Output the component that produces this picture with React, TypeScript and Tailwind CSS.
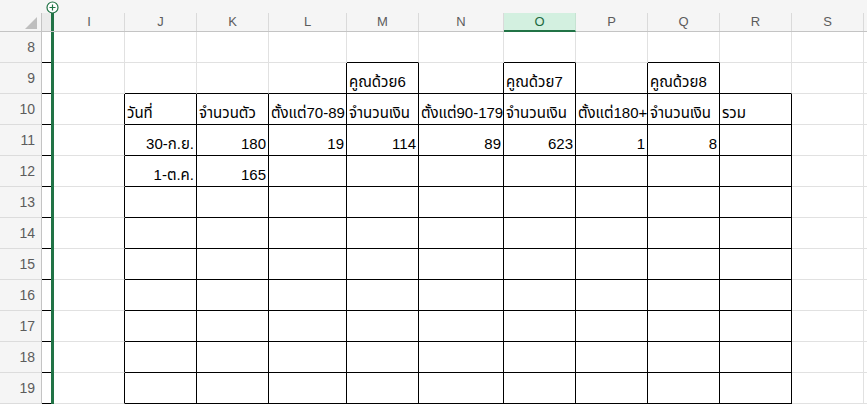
const cols = [
  { k: "I", w: "w-[71px]" },
  { k: "J", w: "w-[72px]" },
  { k: "K", w: "w-[72px]" },
  { k: "L", w: "w-[78px]" },
  { k: "M", w: "w-[72px]" },
  { k: "N", w: "w-[85px]" },
  { k: "O", w: "w-[72px]" },
  { k: "P", w: "w-[72px]" },
  { k: "Q", w: "w-[72px]" },
  { k: "R", w: "w-[72px]" },
  { k: "S", w: "w-[72px]" },
];

const rows = [8, 9, 10, 11, 12, 13, 14, 15, 16, 17, 18, 19];

// cell values: [text, right aligned]
const data: Record<string, [string, boolean]> = {
  "9-M": ["คูณด้วย6", false],
  "9-O": ["คูณด้วย7", false],
  "9-Q": ["คูณด้วย8", false],
  "10-J": ["วันที่", false],
  "10-K": ["จำนวนตัว", false],
  "10-L": ["ตั้งแต่70-89", false],
  "10-M": ["จำนวนเงิน", false],
  "10-N": ["ตั้งแต่90-179", false],
  "10-O": ["จำนวนเงิน", false],
  "10-P": ["ตั้งแต่180+", false],
  "10-Q": ["จำนวนเงิน", false],
  "10-R": ["รวม", false],
  "11-J": ["30-ก.ย.", true],
  "11-K": ["180", true],
  "11-L": ["19", true],
  "11-M": ["114", true],
  "11-N": ["89", true],
  "11-O": ["623", true],
  "11-P": ["1", true],
  "11-Q": ["8", true],
  "12-J": ["1-ต.ค.", true],
  "12-K": ["165", true],
};

function boxed(r: number, c: number) {
  if (c < 0 || c >= cols.length) return false;
  const k = cols[c].k;
  if (r === 9) return k === "M" || k === "O" || k === "Q";
  if (r >= 10 && r <= 19) return c >= 1 && c <= 9;
  return false;
}

const font = "font-['Tahoma','Liberation_Sans','Noto_Sans_Thai','Loma','Garuda',sans-serif]";

export default function App() {
  return (
    <div className={`relative h-[405px] w-[867px] overflow-hidden bg-white ${font}`}>
      {/* top strip */}
      <div className="flex h-[13px] bg-[#f5f5f5]">
        <div className="w-[51px]" />
        <div className="mt-[10px] w-[3px] bg-[#217346]" />
      </div>
      <svg className="absolute left-[46px] top-[1px]" width="13" height="13" viewBox="0 0 13 13">
        <circle cx="6.5" cy="6.5" r="5.5" fill="white" stroke="#217346" strokeWidth="1.2" />
        <path d="M6.5 3.5v6M3.5 6.5h6" stroke="#217346" strokeWidth="1.2" />
      </svg>

      {/* column header */}
      <div className="flex h-[19px] border-b border-[#c4c4c4] bg-[#f5f5f5] text-[13px] text-[#5c5c5c]">
        <div className="relative w-[42px] border-r border-[#c4c4c4]">
          <svg className="absolute left-[25px] top-[4px]" width="12" height="12" viewBox="0 0 12 12">
            <path d="M12 0L12 12L0 12Z" fill="#bfbfbf" />
          </svg>
        </div>
        <div className="w-[9px] bg-[#ebebeb]" />
        <div className="w-[3px] bg-[#217346]" />
        {cols.map((c) =>
          c.k === "O" ? (
            <div
              key={c.k}
              className={`${c.w} -mb-px flex items-center justify-center border-r border-b-2 border-r-[#c6e3d2] border-b-[#217346] bg-[#d3f0e0] text-[#1d6b40]`}
            >
              {c.k}
            </div>
          ) : (
            <div key={c.k} className={`${c.w} flex items-center justify-center border-r border-[#dadada]`}>
              {c.k}
            </div>
          )
        )}
        <div className="flex-1" />
      </div>

      {rows.map((r) => (
        <div key={r} className="flex h-[31px]">
          <div className="flex w-[42px] items-center justify-end border-r border-b border-r-[#c4c4c4] border-b-[#dcdcdc] bg-[#f5f5f5] pr-[6px] text-[14px] text-[#5c5c5c]">
            {r}
          </div>
          <div className="w-[9px] border-b border-black" />
          <div className="w-[3px] bg-[#217346]" />
          {cols.map((c, ci) => {
            const v = data[`${r}-${c.k}`];
            const right = boxed(r, ci) || boxed(r, ci + 1) ? "border-r-black" : "border-r-[#e1e1e1]";
            const bottom = boxed(r, ci) || boxed(r + 1, ci) ? "border-b-black" : "border-b-[#e1e1e1]";
            return (
              <div
                key={c.k}
                className={`${c.w} flex items-end whitespace-nowrap border-r border-b ${right} ${bottom} px-[2px] pb-[2px] text-[15px] leading-[18px] text-black ${
                  v && v[1] ? "justify-end" : "justify-start"
                }`}
              >
                {v ? v[0] : null}
              </div>
            );
          })}
          <div className="flex-1 border-b border-[#e1e1e1]" />
        </div>
      ))}
    </div>
  );
}
